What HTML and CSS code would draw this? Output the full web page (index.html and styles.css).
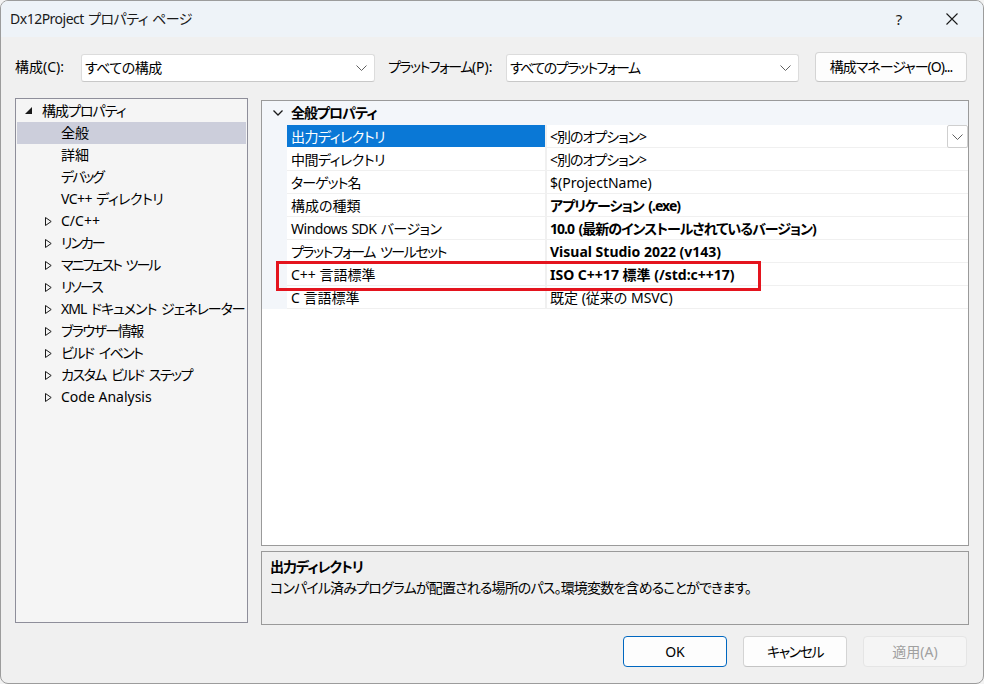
FILE: index.html
```html
<!DOCTYPE html>
<html lang="ja">
<head>
<meta charset="utf-8">
<title>Dx12Project プロパティ ページ</title>
<link rel="stylesheet" href="styles.css">
</head>
<body>
<div class="window">
  <div class="titlebar">
    <span class="title kn0">Dx12Project プロパティ ページ</span>
    <span class="tb-help">?</span>
    <span class="tb-close"><svg width="12" height="12" viewBox="0 0 12 12"><path d="M0.5 0.5 L11.5 11.5 M11.5 0.5 L0.5 11.5" stroke="#1a1a1a" stroke-width="1.1" fill="none"/></svg></span>
  </div>

  <div class="toolbar">
    <span class="lbl lbl-config">構成(C):</span>
    <div class="combo combo-config"><span class="kn0">すべての構成</span><svg class="chev" width="11" height="6" viewBox="0 0 11 6"><path d="M0.5 0.5 L5.5 5.5 L10.5 0.5" stroke="#606060" stroke-width="1" fill="none"/></svg></div>
    <span class="lbl lbl-platform"><span class="kn2">プラットフォーム</span>(P):</span>
    <div class="combo combo-platform"><span class="kn2">すべてのプラットフォーム</span><svg class="chev" width="11" height="6" viewBox="0 0 11 6"><path d="M0.5 0.5 L5.5 5.5 L10.5 0.5" stroke="#606060" stroke-width="1" fill="none"/></svg></div>
    <button class="btn btn-manager kn">構成マネージャー(O)...</button>
  </div>

  <div class="main">
    <div class="tree">
      <div class="node root"><svg class="tri" width="7" height="7" viewBox="0 0 7 7"><polygon points="7,0 7,7 0,7" fill="#1a1a1a"/></svg><span class="kn">構成プロパティ</span></div>
      <div class="node leaf selected"><span>全般</span></div>
      <div class="node leaf"><span>詳細</span></div>
      <div class="node leaf"><span class="kn3">デバッグ</span></div>
      <div class="node leaf"><span class="kn0">VC++ ディレクトリ</span></div>
      <div class="node branch"><svg class="tri-o" width="7" height="9" viewBox="0 0 7 9"><polygon points="0.5,0.5 6.2,4.5 0.5,8.5" fill="none" stroke="#1a1a1a" stroke-width="1"/></svg><span>C/C++</span></div>
      <div class="node branch"><svg class="tri-o" width="7" height="9" viewBox="0 0 7 9"><polygon points="0.5,0.5 6.2,4.5 0.5,8.5" fill="none" stroke="#1a1a1a" stroke-width="1"/></svg><span class="kn3">リンカー</span></div>
      <div class="node branch"><svg class="tri-o" width="7" height="9" viewBox="0 0 7 9"><polygon points="0.5,0.5 6.2,4.5 0.5,8.5" fill="none" stroke="#1a1a1a" stroke-width="1"/></svg><span class="kn3">マニフェスト ツール</span></div>
      <div class="node branch"><svg class="tri-o" width="7" height="9" viewBox="0 0 7 9"><polygon points="0.5,0.5 6.2,4.5 0.5,8.5" fill="none" stroke="#1a1a1a" stroke-width="1"/></svg><span class="kn3">リソース</span></div>
      <div class="node branch"><svg class="tri-o" width="7" height="9" viewBox="0 0 7 9"><polygon points="0.5,0.5 6.2,4.5 0.5,8.5" fill="none" stroke="#1a1a1a" stroke-width="1"/></svg><span class="kn">XML ドキュメント ジェネレーター</span></div>
      <div class="node branch"><svg class="tri-o" width="7" height="9" viewBox="0 0 7 9"><polygon points="0.5,0.5 6.2,4.5 0.5,8.5" fill="none" stroke="#1a1a1a" stroke-width="1"/></svg><span class="kn2">ブラウザー情報</span></div>
      <div class="node branch"><svg class="tri-o" width="7" height="9" viewBox="0 0 7 9"><polygon points="0.5,0.5 6.2,4.5 0.5,8.5" fill="none" stroke="#1a1a1a" stroke-width="1"/></svg><span class="kn2">ビルド イベント</span></div>
      <div class="node branch"><svg class="tri-o" width="7" height="9" viewBox="0 0 7 9"><polygon points="0.5,0.5 6.2,4.5 0.5,8.5" fill="none" stroke="#1a1a1a" stroke-width="1"/></svg><span class="kn2">カスタム ビルド ステップ</span></div>
      <div class="node branch"><svg class="tri-o" width="7" height="9" viewBox="0 0 7 9"><polygon points="0.5,0.5 6.2,4.5 0.5,8.5" fill="none" stroke="#1a1a1a" stroke-width="1"/></svg><span>Code Analysis</span></div>
    </div>

    <div class="right">
      <div class="grid">
        <div class="group">
          <span class="group-chev"><svg width="10" height="6" viewBox="0 0 10 6"><path d="M0.5 0.5 L5 5 L9.5 0.5" stroke="#1a1a1a" stroke-width="1.3" fill="none"/></svg></span>
          <span class="group-title kn">全般プロパティ</span>
        </div>
        <div class="row">
          <div class="gutter"></div>
          <div class="name sel kn0">出力ディレクトリ</div>
          <div class="value"><span class="kn">&lt;別のオプション&gt;</span><span class="dd"><svg width="11" height="6" viewBox="0 0 11 6"><path d="M0.5 0.5 L5.5 5.5 L10.5 0.5" stroke="#606060" stroke-width="1" fill="none"/></svg></span></div>
        </div>
        <div class="row">
          <div class="gutter"></div>
          <div class="name kn0">中間ディレクトリ</div>
          <div class="value"><span class="kn">&lt;別のオプション&gt;</span></div>
        </div>
        <div class="row">
          <div class="gutter"></div>
          <div class="name kn">ターゲット名</div>
          <div class="value"><span>$(ProjectName)</span></div>
        </div>
        <div class="row">
          <div class="gutter"></div>
          <div class="name">構成の種類</div>
          <div class="value bold"><span class="kn">アプリケーション (.exe)</span></div>
        </div>
        <div class="row">
          <div class="gutter"></div>
          <div class="name kn0">Windows SDK バージョン</div>
          <div class="value bold"><span class="kn">10.0 (最新のインストールされているバージョン)</span></div>
        </div>
        <div class="row">
          <div class="gutter"></div>
          <div class="name kn2">プラットフォーム ツールセット</div>
          <div class="value bold"><span>Visual Studio 2022 (v143)</span></div>
        </div>
        <div class="row">
          <div class="gutter"></div>
          <div class="name">C++ 言語標準</div>
          <div class="value bold"><span>ISO C++17 標準 (/std:c++17)</span></div>
        </div>
        <div class="row">
          <div class="gutter"></div>
          <div class="name">C 言語標準</div>
          <div class="value"><span>既定 (従来の MSVC)</span></div>
        </div>
        <div class="highlight"></div>
      </div>
      <div class="desc">
        <div class="desc-title kn">出力ディレクトリ</div>
        <div class="desc-text">コンパイル済みプログラムが配置される場所のパス。環境変数を含めることができます。</div>
      </div>
    </div>
  </div>

  <div class="actions">
    <button class="btn btn-ok">OK</button>
    <button class="btn kn2">キャンセル</button>
    <button class="btn btn-disabled">適用(A)</button>
  </div>
</div>
</body>
</html>
```

FILE: styles.css
```css
* { box-sizing: border-box; }

html, body {
  margin: 0;
  padding: 0;
  background: #f3f3f3;
}

body {
  font-family: "Noto Sans", "Noto Sans CJK JP", sans-serif;
  font-size: 14px;
  color: #000;
  font-feature-settings: "palt";
}

/* narrower kana tracking, to approach the Yu Gothic UI widths */
.kn0 { letter-spacing: -0.5px; word-spacing: 1px; }
.kn  { letter-spacing: -1px; word-spacing: 2px; }
.kn2 { letter-spacing: -1.5px; word-spacing: 3px; }
.kn3 { letter-spacing: -2px; word-spacing: 3px; }

.window {
  width: 984px;
  height: 684px;
  border: 1px solid #9c9c9c;
  border-radius: 8px;
  background: #f0f0f0;
  overflow: hidden;
  display: flex;
  flex-direction: column;
}

/* title bar */
.titlebar {
  height: 36px;
  flex: none;
  background: #eef3f8;
  display: flex;
  align-items: center;
  padding-left: 9px;
}
.title {
  font-size: 14px;
  line-height: 20px;
  color: #1a1a1a;
  flex: 1;
}
.tb-help {
  width: 20px;
  text-align: center;
  margin-right: 37px;
  font-size: 15px;
  color: #1a1a1a;
}
.tb-close {
  width: 12px;
  height: 12px;
  margin-right: 25px;
  display: flex;
}

/* toolbar */
.toolbar {
  display: flex;
  align-items: center;
  height: 30px;
  margin-top: 15px;
  padding-left: 14px;
  flex: none;
}
.lbl {
  line-height: 20px;
  color: #000;
  white-space: nowrap;
}
.lbl-config { width: 66px; }
.lbl-platform { width: 118px; margin-left: 13px; }

.combo {
  height: 28px;
  background: #fff;
  border: 1px solid #dcdcdc;
  border-bottom-color: #c8c8c8;
  border-radius: 3px;
  display: flex;
  align-items: center;
  padding-left: 3px;
  padding-right: 7px;
  margin-top: 1px;
}
.combo span { flex: 1; line-height: 20px; }
.combo-config { width: 294px; }
.combo-platform { width: 293px; }
.chev { flex: none; }

.btn {
  font-family: inherit;
  font-size: 14px;
  font-feature-settings: "palt";
  color: #000;
  background: #fdfdfd;
  border: 1px solid #d4d4d4;
  border-bottom-color: #c4c4c4;
  border-radius: 4px;
  height: 31px;
  width: 104px;
  padding: 0;
  line-height: 20px;
}
.btn-manager {
  width: 152px;
  height: 30px;
  margin-left: 16px;
  margin-top: -1px;
}

/* main */
.main {
  display: flex;
  margin-top: 16px;
  padding-left: 14px;
  gap: 13px;
  flex: none;
  height: 527px;
}

.tree {
  width: 233px;
  height: 525px;
  border: 1px solid #8e8e9a;
  background: #f5f5f5;
  padding: 1px;
  overflow: hidden;
}
.node {
  height: 22px;
  display: flex;
  align-items: center;
  line-height: 20px;
  white-space: nowrap;
}
.node svg { flex: none; }
.node.root { padding-left: 8px; }
.node.root .tri { margin-top: -2px; margin-right: 10px; }
.node.leaf { padding-left: 44px; }
.node.branch { padding-left: 28px; }
.node.branch .tri-o { margin-right: 9px; }
.node.selected { background: #cccedb; }

.right {
  width: 708px;
  display: flex;
  flex-direction: column;
  gap: 5px;
  margin-top: 2px;
}

.grid {
  height: 446px;
  border: 1px solid #9a9a9a;
  background: #fff;
  position: relative;
}
.group {
  height: 24px;
  background: #f3f6fa;
  display: flex;
  align-items: center;
}
.group-chev {
  width: 29px;
  display: flex;
  justify-content: center;
  padding-left: 2px;
}
.group-title {
  font-weight: bold;
  line-height: 20px;
}
.row {
  display: flex;
  height: 23px;
}
.gutter {
  width: 25px;
  background: #f3f6fa;
}
.name {
  width: 258px;
  padding-left: 4px;
  padding-top: 1px;
  line-height: 21px;
  border-bottom: 1px solid #f0f0f0;
  white-space: nowrap;
}
.name.sel {
  background: #0a78d6;
  color: #fff;
  border-bottom-color: #fff;
}
.value {
  flex: 1;
  display: flex;
  align-items: center;
  padding-left: 3px;
  border-left: 2px solid #f0f0f0;
  border-bottom: 1px solid #f0f0f0;
  white-space: nowrap;
}
.value span { line-height: 22px; padding-top: 1px; }
.value.bold { font-weight: bold; }
.dd {
  margin-left: auto;
  width: 21px;
  height: 23px;
  border: 1px solid #cfcfcf;
  border-radius: 2px;
  background: #fff;
  display: flex;
  align-items: center;
  justify-content: center;
  margin-top: 1px;
}
.value .dd { padding-top: 0; }

.highlight {
  position: absolute;
  left: 14px;
  top: 160px;
  width: 485px;
  height: 30px;
  border: 3px solid #e4141e;
}

.desc {
  height: 74px;
  border: 1px solid #9a9a9a;
  background: #efefef;
  padding: 4px 8px 0 8px;
}
.desc-title {
  font-weight: bold;
  line-height: 21px;
}
.desc-text {
  line-height: 21px;
  letter-spacing: -0.85px;
}

/* actions */
.actions {
  display: flex;
  justify-content: flex-end;
  gap: 16px;
  margin-top: 11px;
  padding-right: 16px;
}
.btn-ok {
  border: 1px solid #0067c0;
}
.btn-disabled {
  background: #f5f5f5;
  border-color: #e5e5e5;
  color: #a0a0a0;
}
```
